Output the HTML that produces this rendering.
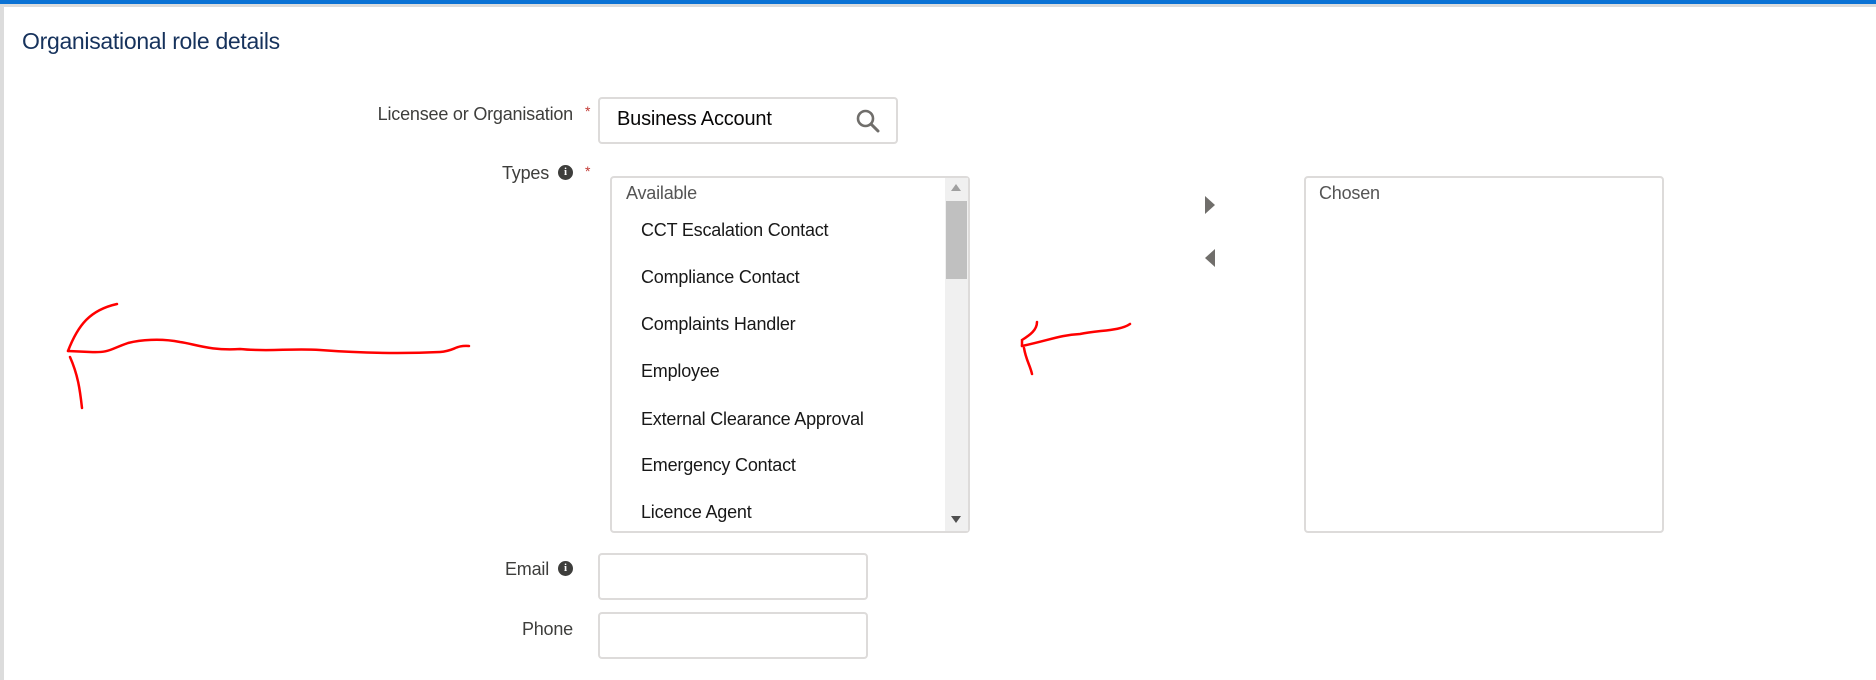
<!DOCTYPE html>
<html><head><meta charset="utf-8"><style>
*{box-sizing:border-box;margin:0;padding:0}
body{width:1876px;height:680px;background:#fff;position:relative;overflow:hidden;font-family:"Liberation Sans",sans-serif;}
.abs{position:absolute}
.topbar{left:0;top:0;width:1876px;height:4px;background:#0b72d4}
.topline{left:0;top:4px;width:1876px;height:3px;background:#dcdcdc}
.leftb{left:0;top:4px;width:4px;height:676px;background:#dcdcdc}
.title{left:22px;top:28px;font-size:23px;color:#16325c;letter-spacing:-0.3px}
.lbl{font-size:18px;color:#3e3e3c;text-align:right;letter-spacing:-0.2px}
.req{color:#c23934;font-size:14px}
.box{border:2px solid #dddbda;border-radius:4px;background:#fff}
.info{width:15px;height:15px;border-radius:50%;background:#3e3e3c;color:#fff;font-size:11px;font-weight:bold;text-align:center;line-height:15px;font-family:"Liberation Serif",serif}
.item{left:641px;font-size:18px;color:#181818;letter-spacing:-0.2px}
</style></head><body>
<div class="abs topbar"></div><div class="abs topline"></div><div class="abs leftb"></div>
<div class="abs title">Organisational role details</div>

<div class="abs lbl" style="right:1303px;top:104px">Licensee or Organisation</div>
<div class="abs req" style="left:585px;top:103px">*</div>
<div class="abs box" style="left:598px;top:97px;width:300px;height:47px"></div>
<div class="abs" style="left:617px;top:108px;font-size:20px;color:#080707;letter-spacing:-0.2px">Business Account</div>
<svg class="abs" style="left:855px;top:108px" width="26" height="26" viewBox="0 0 26 26"><circle cx="10.5" cy="10.5" r="7.5" fill="none" stroke="#706e6b" stroke-width="2.6"/><path d="M16 16 L23 23" stroke="#706e6b" stroke-width="3" stroke-linecap="round"/></svg>

<div class="abs lbl" style="right:1327px;top:163px">Types</div>
<div class="abs info" style="left:558px;top:165px">i</div>
<div class="abs req" style="left:585px;top:163px">*</div>

<div class="abs box" style="left:610px;top:176px;width:360px;height:357px;border-width:2px"></div>
<div class="abs" style="left:945px;top:178px;width:23px;height:353px;background:#f0f0f0"></div>
<div class="abs" style="left:946px;top:201px;width:21px;height:78px;background:#c0c0c0"></div>
<div class="abs" style="left:951px;top:184px;width:0;height:0;border-left:5px solid transparent;border-right:5px solid transparent;border-bottom:7px solid #a0a0a0"></div>
<div class="abs" style="left:951px;top:516px;width:0;height:0;border-left:5px solid transparent;border-right:5px solid transparent;border-top:7px solid #505050"></div>
<div class="abs" style="left:626px;top:183px;font-size:18px;color:#555;letter-spacing:-0.2px">Available</div>
<div class="abs item" style="top:220px">CCT Escalation Contact</div>
<div class="abs item" style="top:267px">Compliance Contact</div>
<div class="abs item" style="top:314px">Complaints Handler</div>
<div class="abs item" style="top:361px">Employee</div>
<div class="abs item" style="top:409px">External Clearance Approval</div>
<div class="abs item" style="top:455px">Emergency Contact</div>
<div class="abs item" style="top:502px">Licence Agent</div>

<div class="abs" style="left:1205px;top:196px;width:0;height:0;border-top:9px solid transparent;border-bottom:9px solid transparent;border-left:10px solid #706e6b"></div>
<div class="abs" style="left:1205px;top:249px;width:0;height:0;border-top:9px solid transparent;border-bottom:9px solid transparent;border-right:10px solid #706e6b"></div>

<div class="abs box" style="left:1304px;top:176px;width:360px;height:357px"></div>
<div class="abs" style="left:1319px;top:183px;font-size:18px;color:#555;letter-spacing:-0.2px">Chosen</div>

<div class="abs lbl" style="right:1327px;top:559px">Email</div>
<div class="abs info" style="left:558px;top:561px">i</div>
<div class="abs box" style="left:598px;top:553px;width:270px;height:47px"></div>
<div class="abs lbl" style="right:1303px;top:619px">Phone</div>
<div class="abs box" style="left:598px;top:612px;width:270px;height:47px"></div>

<svg class="abs" style="left:0;top:0" width="1876" height="680" viewBox="0 0 1876 680">
<g fill="none" stroke="#f00" stroke-width="2.5" stroke-linecap="round">
<path d="M469 346 C455 345 455 351 440 352 C400 354 360 353 320 350 C290 348 270 352 240 349 C210 351 195 344 180 342 C160 338 140 340 128 343 C110 349 110 353 90 352 L68 351"/>
<path d="M68 351 C78 325 90 310 117 304"/>
<path d="M70 357 C78 375 80 390 82 408"/>
<path d="M1130 324 C1120 331 1100 330 1080 334 C1060 335 1050 340 1022 346"/>
<path d="M1022 346 L1022 340 C1030 335 1037 330 1037 322"/>
<path d="M1024 348 C1026 360 1030 365 1032 374"/>
</g></svg>
</body></html>
